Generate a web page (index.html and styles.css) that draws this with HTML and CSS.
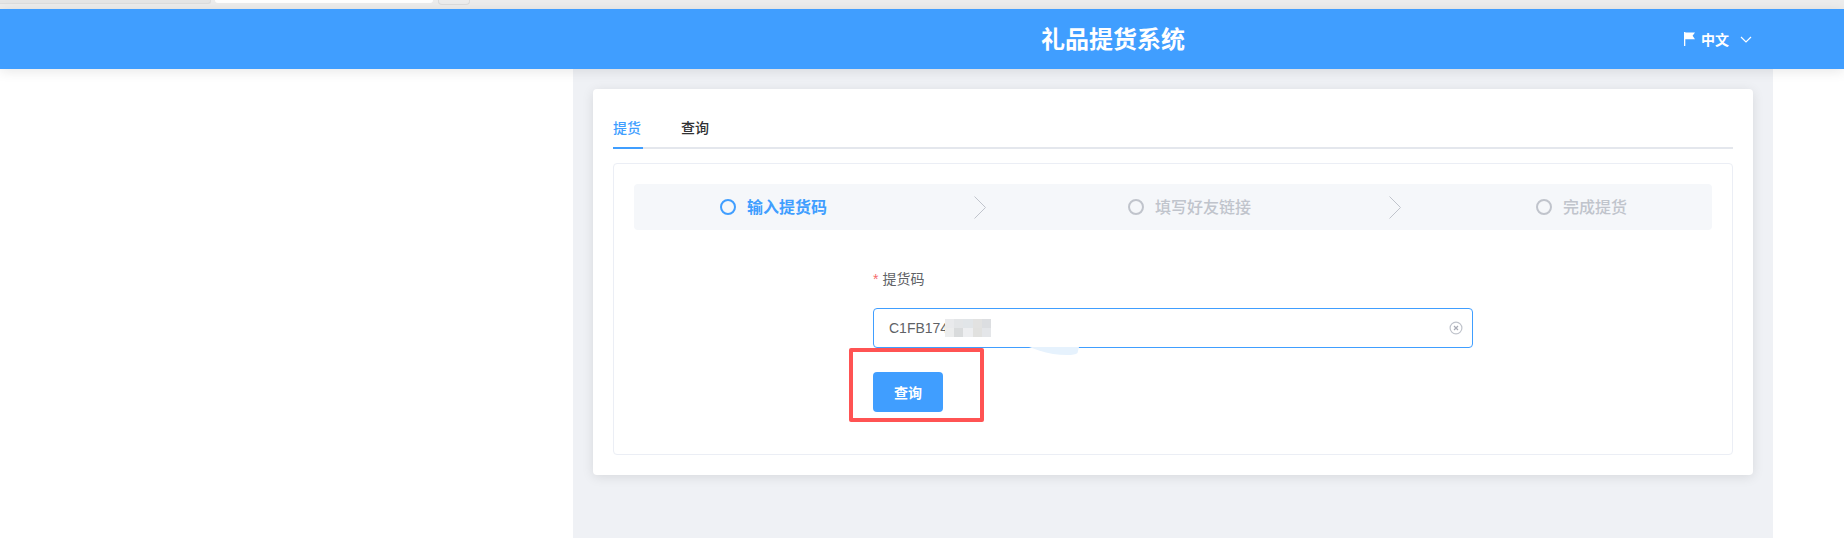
FILE: index.html
```html
<!DOCTYPE html>
<html lang="zh-CN">
<head>
<meta charset="UTF-8">
<meta name="viewport" content="width=device-width, initial-scale=1.0">
<title>礼品提货系统</title>
<link rel="stylesheet" href="styles.css">
</head>
<body>
    <!-- bit of the browser tab strip left in the capture -->
    <div class="tabstrip">
        <div class="tab-old"></div>
        <div class="tab-current"></div>
        <div class="tab-new"></div>
    </div>

    <header class="topbar">
        <div class="title">礼品提货系统</div>
        <div class="lang">
            <svg class="flag" width="11" height="14" viewBox="0 0 11 14"><path d="M0 0h1.3v14H0z M1.3 0.5H11L8.6 3.8 11 7.2H1.3z" fill="#fff"/></svg>
            <span>中文</span>
            <svg class="caret" width="12" height="7" viewBox="0 0 12 7"><path d="M1 1l5 5 5-5" fill="none" stroke="#fff" stroke-width="1.2"/></svg>
        </div>
    </header>

    <main class="content">
        <div class="card">
            <div class="tabs">
                <div class="tab active">提货</div>
                <div class="tab">查询</div>
            </div>
            <div class="panel">
                <div class="steps">
                    <div class="step step-first current"><i class="dot"></i><span>输入提货码</span></div>
                    <svg class="arrow arrow-first" width="12" height="23" viewBox="0 0 12 23"><path d="M0.5 0.5l11 11-11 11" fill="none" stroke="#c0c4cc" stroke-width="1"/></svg>
                    <div class="step step-second"><i class="dot"></i><span>填写好友链接</span></div>
                    <svg class="arrow arrow-second" width="12" height="23" viewBox="0 0 12 23"><path d="M0.5 0.5l11 11-11 11" fill="none" stroke="#c0c4cc" stroke-width="1"/></svg>
                    <div class="step step-third"><i class="dot"></i><span>完成提货</span></div>
                </div>

                <form class="pickup-form">
                    <label class="field-label" for="code"><span class="star">*</span>提货码</label>
                    <div class="input-wrap">
                        <input class="code-input" id="code" type="text" value="C1FB174">
                        <!-- mosaic over the rest of the code -->
                        <div class="mosaic">
                            <i style="background:#e9eaec"></i><i style="background:#e3e5e7"></i><i style="background:#e1e5e8"></i><i style="background:#e2e2e1"></i><i style="background:#dcdee1"></i>
                            <i style="background:#eceded"></i><i style="background:#d9dbdc"></i><i style="background:#edeef0"></i><i style="background:#e1e1df"></i><i style="background:#e4e6e9"></i>
                        </div>
                        <svg class="clear" width="14" height="14" viewBox="0 0 14 14"><circle cx="7" cy="7" r="5.9" fill="none" stroke="#c0c4cc" stroke-width="1.2"/><path d="M5 5l4 4M9 5l-4 4" stroke="#a8abb5" stroke-width="1.2"/></svg>
                        <svg class="smudge" width="50" height="9" viewBox="0 0 50 9"><path d="M0 0h50l-1.500 6Q46 8 38 8 24 8 10 3.500z" fill="#e6f2fd"/></svg>
                    </div>
                    <button class="submit" type="button">查询</button>
                    <div class="red-mark"></div>
                </form>
            </div>
        </div>
    </main>
</body>
</html>
```

FILE: styles.css
```css
html, body {
    margin: 0;
    height: 539px;
    overflow: hidden;
    background: #fff;
}
body {
    font-family: "Liberation Sans", "Noto Sans CJK SC", sans-serif;
    font-size: 14px;
    color: #303133;
}

/* browser strip */
.tabstrip {
    display: flex;
    align-items: flex-start;
    height: 9px;
    background: #ededed;
}
.tab-old {
    width: 210px;
    height: 3px;
    background: #e6e6e6;
    border: solid #dedede;
    border-width: 0 1px 1px 0;
    border-radius: 0 0 3px 0;
}
.tab-current {
    width: 218px;
    height: 3px;
    margin-left: 4px;
    background: #fff;
    border-radius: 0 0 3px 3px;
}
.tab-new {
    width: 30px;
    height: 4px;
    margin-left: 5px;
    border: solid #dcdcdc;
    border-width: 0 1px 1px 1px;
    border-radius: 0 0 4px 4px;
}

/* header */
.topbar {
    position: relative;
    z-index: 2;
    display: flex;
    align-items: center;
    height: 60px;
    padding: 0 92px 0 1041px;
    background: #409eff;
    color: #fff;
    box-shadow: 0 2px 12px rgba(0, 0, 0, .1);
}
.title {
    padding-bottom: 3px;
    font-size: 24px;
    font-weight: 700;
}
.lang {
    display: flex;
    align-items: center;
    margin-left: auto;
    font-size: 14px;
    font-weight: 700;
}
.flag {
    margin-right: 6px;
    margin-left: 1px;
}
.caret {
    margin-left: 11px;
}

/* page content */
.content {
    width: 1160px;
    height: 429px;
    margin-left: 573px;
    padding: 20px;
    background: #eff1f5;
}
.card {
    box-sizing: border-box;
    height: 386px;
    padding: 20px;
    background: #fff;
    border-radius: 4px;
    box-shadow: 0 2px 12px rgba(0, 0, 0, .1);
}

/* tabs */
.tabs {
    display: flex;
    height: 38px;
    margin-bottom: 14px;
    border-bottom: 2px solid #e4e7ed;
}
.tab {
    position: relative;
    margin-right: 40px;
    line-height: 38px;
    font-weight: 500;
}
.tab.active {
    color: #409eff;
}
.tab.active::after {
    content: "";
    position: absolute;
    left: 0;
    right: -2px;
    top: 38px;
    height: 2px;
    background: #409eff;
}

.panel {
    box-sizing: border-box;
    height: 292px;
    padding: 20px;
    border: 1px solid #ebeef5;
    border-radius: 4px;
}

/* steps */
.steps {
    display: flex;
    align-items: center;
    height: 46px;
    padding-left: 86px;
    background: #f5f7fa;
    border-radius: 4px;
}
.step {
    display: flex;
    align-items: center;
    font-size: 16px;
    font-weight: 500;
    color: #c0c4cc;
}
.step span {
    margin-bottom: 2px;
}
.step.current {
    color: #409eff;
    font-weight: 700;
}
.dot {
    box-sizing: border-box;
    width: 16px;
    height: 16px;
    margin-right: 11px;
    border: 2px solid #c0c4cc;
    border-radius: 50%;
}
.current .dot {
    border-color: #409eff;
}
.arrow-first {
    margin-left: 147px;
}
.step-second {
    margin-left: 142px;
}
.arrow-second {
    margin-left: 138px;
}
.step-third {
    margin-left: 135px;
}

/* form */
.pickup-form {
    position: relative;
    width: 600px;
    margin: 30px 0 0 239px;
}
.field-label {
    display: block;
    padding-bottom: 9px;
    line-height: 39px;
    color: #606266;
}
.star {
    margin-right: 4px;
    color: #f56c6c;
}
.input-wrap {
    position: relative;
    height: 40px;
    margin-bottom: 24px;
}
.code-input {
    box-sizing: border-box;
    display: block;
    width: 100%;
    height: 40px;
    padding: 0 15px;
    border: 1px solid #409eff;
    border-radius: 4px;
    outline: none;
    font: 14px "Liberation Sans", sans-serif;
    color: #606266;
}
.mosaic {
    position: absolute;
    left: 72px;
    top: 11px;
    display: grid;
    grid-template-columns: repeat(5, 9.2px);
    grid-auto-rows: 9px;
}
.clear {
    position: absolute;
    right: 10px;
    top: 13px;
}
.smudge {
    position: absolute;
    left: 156px;
    top: 39px;
}
.submit {
    display: block;
    width: 70px;
    height: 40px;
    padding: 0 0 1px;
    border: none;
    border-radius: 4px;
    background: #409eff;
    color: #fff;
    font: 700 14px "Liberation Sans", "Noto Sans CJK SC", sans-serif;
}
.red-mark {
    position: absolute;
    left: -24px;
    top: 88px;
    box-sizing: border-box;
    width: 135px;
    height: 74px;
    border: 4px solid #ff5353;
    border-radius: 2px;
}
```
